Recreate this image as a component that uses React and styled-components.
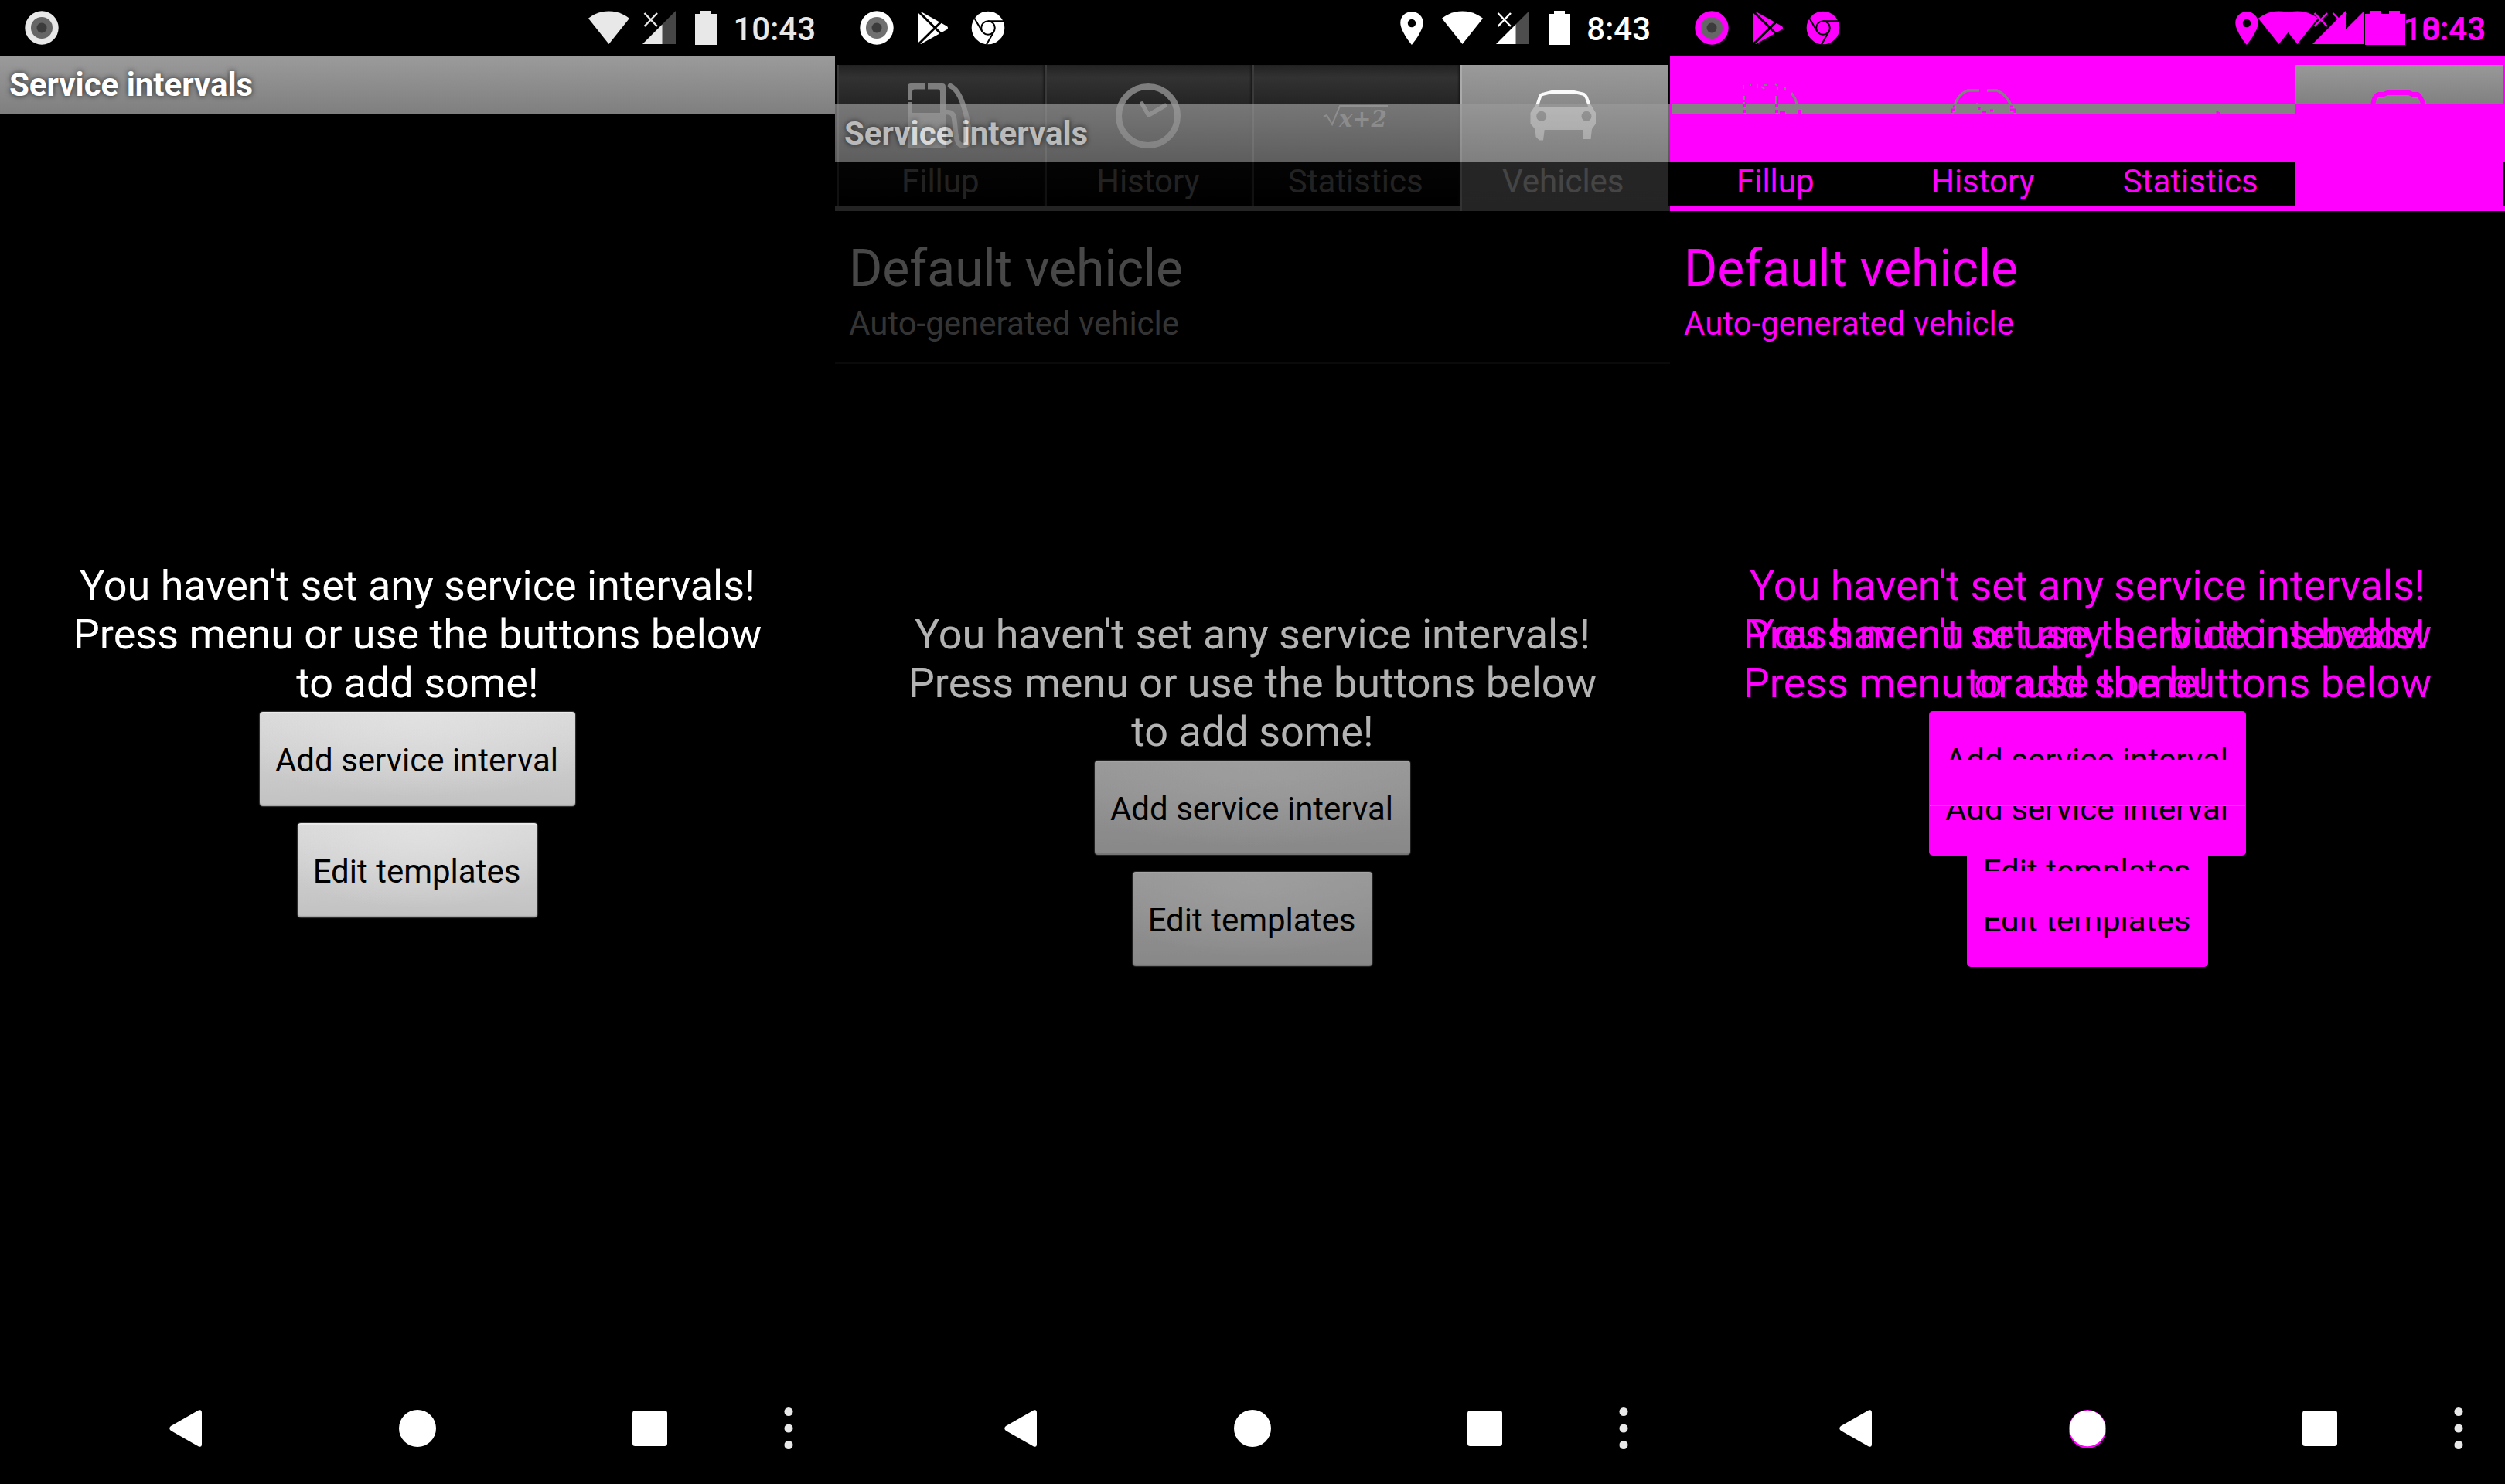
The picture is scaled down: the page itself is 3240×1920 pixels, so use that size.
import React from "react";
import styled, { createGlobalStyle, css } from "styled-components";

const MAGENTA = "#ff00ff";

const GlobalStyle = createGlobalStyle`
  *, *::before, *::after { box-sizing: border-box; }
  body {
    margin: 0;
    background: #000;
    font-family: Roboto, "Noto Sans", sans-serif;
  }
  h1, h2, p { margin: 0; font-weight: 400; }
  button {
    margin: 0;
    padding: 0;
    border: 0;
    background: none;
    font: inherit;
    color: inherit;
  }
  svg { display: block; flex: none; }
`;

const Board = styled.main`
  display: grid;
  grid-template-columns: repeat(3, minmax(0, 1fr));
  min-height: 100vh;
  background: #000;
`;

const Screen = styled.section`
  display: flex;
  flex-direction: column;
  min-width: 0;
  overflow: hidden;
  background: #000;
  color: #fff;
`;

/* ---------- status bar ---------- */

const StatusBar = styled.header`
  display: flex;
  justify-content: space-between;
  align-items: center;
  height: 72px;
  padding: 0 25px 0 30px;
  color: ${(p) => p.$color};
`;

const Notifications = styled.div`
  display: flex;
  gap: 24px;
`;

const IndicatorStack = styled.div`
  display: grid;
  justify-items: end;
`;

const Indicators = styled.div`
  grid-area: 1 / 1;
  display: flex;
  align-items: center;
  gap: 17px;
`;

const Clock = styled.time`
  font-size: 42px;
  line-height: 48px;
  font-weight: 500;
  padding-top: 3px;
`;

/* ---------- window layers ---------- */

const Body = styled.div`
  flex: 1;
  display: grid;
  grid-template-columns: minmax(0, 1fr);
  overflow: hidden;
`;

const Layer = styled.div`
  grid-area: 1 / 1;
  display: flex;
  flex-direction: column;
  background: ${(p) => p.$background || "transparent"};
  opacity: ${(p) => p.$opacity || 1};
  ${(p) => p.$entering && css`margin-block: 63px -63px;`}
`;

const TitleBar = styled.h1`
  height: 75px;
  padding: 13px 12px;
  background: linear-gradient(#9b9b9b, #7f7f7f);
  font-size: 42px;
  line-height: 49px;
  font-weight: 700;
  text-shadow: 0 0 7px rgba(0, 0, 0, 0.75);
`;

const TitleSpace = styled.div`
  height: 75px;
`;

const EmptyState = styled.div`
  flex: 1;
  display: flex;
  flex-direction: column;
  align-items: center;
  justify-content: center;
  padding: 0 72px 10px;
  color: ${(p) => p.$color || "#fff"};
`;

const Message = styled.p`
  font-size: 54px;
  line-height: 63px;
  text-align: center;
  margin-bottom: 6px;
`;

const Actions = styled.div`
  display: flex;
  flex-direction: column;
  align-items: center;
  gap: 22px;
`;

const ActionButton = styled.button`
  padding: 38px 22px 35px 20px;
  border-radius: 4px;
  background: radial-gradient(ellipse 70% 90% at 50% 0, #e1e1e1, rgba(225, 225, 225, 0)),
    linear-gradient(#d8d8d8, #c2c2c2);
  box-shadow: inset 0 2px 1px #ececec, inset 0 -2px 1px #a6a6a6, 0 0 1px 1px #333;
  color: #000;
  font-size: 42px;
  line-height: 49px;
`;

const DiffButton = styled(ActionButton)`
  position: relative;
  z-index: ${(p) => (p.$entering ? 2 : 1)};
  background: ${MAGENTA};
  box-shadow: 0 0 0 1px ${MAGENTA};
  ${(p) => p.$edge && css`border-top: 1px solid #a04fa0; padding-top: 37px;`}
  ${(p) =>
    p.$entering &&
    css`
      &::before {
        content: "";
        position: absolute;
        inset: 0 0 auto;
        height: 59px;
        background: ${MAGENTA};
        border-bottom: 1px solid #a86fa8;
      }
    `}
`;

/* ---------- tabs ---------- */

const TabRow = styled.nav`
  display: grid;
  grid-template-columns: repeat(4, minmax(0, 1fr));
  height: 189px;
  margin-top: 12px;
  padding: 0 3px;
  background: linear-gradient(${(p) => p.$rule}, ${(p) => p.$rule}) bottom / 100% 6px no-repeat;
`;

const Tab = styled.button`
  display: flex;
  flex-direction: column;
  align-items: center;
  gap: 18px;
  height: 183px;
  padding: 24px 4px 0 0;
  background: linear-gradient(#222, #323232 16px, #212121 60px, #0f0f0f 130px, #000);
  border-left: 2px solid #3a3a3a;
  box-shadow: inset -4px 0 3px -2px #111;
  color: #757575;
  font-size: 42px;
  line-height: 49px;
  ${(p) =>
    p.$selected &&
    css`
      height: 189px;
      background: linear-gradient(#9a9a9a, #878787 60px, #7a7a7a);
      border-left-color: #aaa;
      box-shadow: none;
      color: #eaeaea;
    `}
`;

const DiffTab = styled(Tab)`
  background: linear-gradient(transparent 51px, #838383 51px 63px, transparent 63px);
  border-left: 0;
  padding: 24px 2px 0 0;
  box-shadow: none;
  color: ${MAGENTA};
  ${(p) =>
    p.$selected &&
    css`
      background: linear-gradient(#999, #808080 51px, ${MAGENTA} 51px);
    `}
`;

const VehicleRow = styled.article`
  padding: 36px 18px 26px;
  border-bottom: 2px solid ${(p) => p.$rule};
`;

const VehicleName = styled.h2`
  color: ${(p) => p.$color};
  font-size: 66px;
  line-height: 77px;
`;

const VehicleNote = styled.p`
  margin-top: 8px;
  color: ${(p) => p.$color};
  font-size: 42px;
  line-height: 49px;
`;

/* ---------- navigation bar ---------- */

const NavBar = styled.footer`
  display: flex;
  height: 144px;
  padding: 0 30px 0 90px;
`;

const NavButton = styled.button`
  flex: ${(p) => (p.$narrow ? 2 : 10)} 1 0;
  min-width: 0;
  display: flex;
  align-items: center;
  justify-content: center;
`;

/* ---------- status icons ---------- */

const RecordIcon = ({ inner = "#707070" }) => (
  <svg width="48" height="48" viewBox="0 0 48 48">
    <circle cx="24" cy="24" r="21.7" fill="currentColor" />
    <circle cx="24" cy="24" r="14" fill={inner} />
    <circle cx="24" cy="24" r="6.5" fill="#3c3c3c" />
  </svg>
);

const PlayIcon = () => (
  <svg width="48" height="48" viewBox="0 0 48 48">
    <path d="M5 5L9 3L35 17.500L43 22Q45 24 43 26L35 30.500L9 45L5 43Z" fill="currentColor" />
    <path d="M5 2L36 32.500M5 46L36 15.500" stroke="#000" strokeWidth="3" />
  </svg>
);

const ChromeIcon = () => (
  <svg width="48" height="48" viewBox="0 0 48 48">
    <circle cx="24" cy="24" r="21.300" fill="currentColor" />
    <path d="M24 15.200H45M16.300 28.500L6.300 11.500M31.700 28.500L22 45.500" stroke="#000" strokeWidth="2" />
    <circle cx="24" cy="24" r="8.800" fill="currentColor" stroke="#000" strokeWidth="2" />
  </svg>
);

const PinIcon = () => (
  <svg width="37" height="44" viewBox="0 0 37 44">
    <path
      fillRule="evenodd"
      fill="currentColor"
      d="M15 1C6.800 1 .300 7.400 .300 15.500C.300 26.500 15 44 15 44S29.700 26.500 29.700 15.500C29.700 7.400 23.200 1 15 1ZM15 21.200A5.200 5.200 0 1 1 15 10.800A5.200 5.200 0 0 1 15 21.200Z"
    />
  </svg>
);

const WifiIcon = () => (
  <svg width="53" height="44" viewBox="0 0 53 44">
    <path fill="currentColor" d="M26.500 43L0 9.800C4 6.500 13 .500 26.500 .500S49 6.500 53 9.800Z" />
  </svg>
);

const SignalIcon = ({ dim = "#4d4d4d" }) => (
  <svg width="51" height="44" viewBox="0 0 51 44">
    <path fill={dim} d="M25 18L43 0V43H25Z" />
    <path fill="currentColor" d="M0 43L25.500 17.500V43Z" />
    <path d="M2.500 3L19 20M19 3L2.500 20" stroke="currentColor" strokeWidth="2.500" />
  </svg>
);

const BatteryIcon = () => (
  <svg width="32" height="44" viewBox="0 0 32 44">
    <path fill="currentColor" d="M7 0H21V4H28V44H0V4H7Z" />
  </svg>
);

/* ---------- tab icons ---------- */

const PumpIcon = () => (
  <svg width="84" height="84" viewBox="0 0 84 84">
    <path
      fillRule="evenodd"
      fill="#7d7d7d"
      d="M4 0H22V7.500H26V0H45Q49 0 49 4V84H0V24H6V21.500H0V4Q0 0 4 0ZM9 7.500Q6 7.500 6 11V38H42V11Q42 7.500 39 7.500Z"
    />
    <path
      d="M55 3C66 8 71 24 75 38C78 50 80 62 79 74C78 82 68 82 65 76C61 68 62 56 60 45C59 38 55 37 49 37"
      fill="none"
      stroke="#7d7d7d"
      strokeWidth="6.500"
      strokeLinecap="round"
    />
  </svg>
);

const HistoryIcon = () => (
  <svg width="84" height="84" viewBox="0 0 84 84">
    <circle cx="42" cy="42" r="38" fill="none" stroke="#7d7d7d" strokeWidth="8" />
    <path d="M34 26L42.500 41L64 28.500" fill="none" stroke="#7d7d7d" strokeWidth="5.500" strokeLinecap="round" strokeLinejoin="round" />
  </svg>
);

const RootIcon = () => (
  <svg width="84" height="84" viewBox="0 0 84 84">
    <path d="M1 43L5 41L12 53L22 29H84" fill="none" stroke="#7d7d7d" strokeWidth="2" />
    <text
      x="21"
      y="56"
      fill="#7d7d7d"
      fontFamily='"DejaVu Serif", serif'
      fontSize="29"
      fontWeight="700"
      fontStyle="italic"
    >
      x+2
    </text>
  </svg>
);

const CarIcon = () => (
  <svg width="86" height="84" viewBox="0 0 86 84">
    <path d="M9 29L13 17Q14 14 18 13.500L28 11H57L68 13.500Q71 14 73 18L77 29" fill="none" stroke="#fafafa" strokeWidth="4" />
    <path
      fillRule="evenodd"
      fill="#fafafa"
      d="M7 28L11 30H74L79 28L85 38V52L80 59L78.500 72H69V60H18.700L17 73.500H12L7.500 69L6.500 59L.500 52V38ZM14.700 35.800A6.500 6.500 0 1 0 14.700 48.800A6.500 6.500 0 1 0 14.700 35.800ZM73 35.800A6.500 6.500 0 1 0 73 48.800A6.500 6.500 0 1 0 73 35.800Z"
    />
  </svg>
);

const PumpDiffIcon = () => (
  <svg width="84" height="84" viewBox="0 0 84 84">
    <path
      d="M1 2V7M2 16V21M10 1V3M19 1V6M24 4L28 7M27 2H31M42 1L45 3M45 5V8M55 5V8"
      stroke="#828282"
      strokeWidth="2"
    />
    <path d="M1.500 24V27M43.500 16V27M63 12L68 20L71 29" fill="none" stroke="#828282" strokeWidth="3" />
    <path d="M0 29H4M0 36H4M42 29H46M42 36H46M48 37H55M73 34V39" stroke={MAGENTA} strokeWidth="4" />
  </svg>
);

const HistoryDiffIcon = () => (
  <svg width="84" height="84" viewBox="0 0 84 84">
    <path d="M5 28Q10 14 22 9H37M47 9H60Q72 14 78 28" fill="none" stroke="#828282" strokeWidth="3.500" />
    <path d="M34 25V28" stroke="#828282" strokeWidth="1.500" />
    <path d="M1 38V34H6M83 38V34H77M3 30H6M77 30H81M37 31V34M41 37H46M51 35H55" fill="none" stroke={MAGENTA} strokeWidth="3" />
  </svg>
);

const RootDiffIcon = () => (
  <svg width="84" height="84" viewBox="0 0 84 84">
    <path d="M77 35V39M79 37V39" stroke={MAGENTA} strokeWidth="3" />
  </svg>
);

const CarDiffIcon = () => (
  <svg width="86" height="84" viewBox="0 0 86 84">
    <path d="M10 30L11 23Q13 15 18 14H24L29 12H57L61 14H68Q73 17 76 30" fill="none" stroke={MAGENTA} strokeWidth="6" />
  </svg>
);

/* ---------- shared pieces ---------- */

const IndicatorSet = ({ time, location, dim }) => (
  <Indicators>
    {location && <PinIcon />}
    <WifiIcon />
    <SignalIcon dim={dim} />
    <BatteryIcon />
    <Clock>{time}</Clock>
  </Indicators>
);

const EmptyMessage = () => (
  <Message>
    You haven't set any service intervals!
    <br />
    Press menu or use the buttons below
    <br />
    to add some!
  </Message>
);

const ServiceIntervals = () => (
  <>
    <TitleBar>Service intervals</TitleBar>
    <EmptyState>
      <EmptyMessage />
      <Actions>
        <ActionButton type="button">Add service interval</ActionButton>
        <ActionButton type="button">Edit templates</ActionButton>
      </Actions>
    </EmptyState>
  </>
);

const DiffIntervals = ({ entering }) => (
  <Layer $entering={entering}>
    <TitleSpace />
    <EmptyState $color={MAGENTA}>
      <EmptyMessage />
      <Actions>
        <DiffButton type="button" $entering={entering}>Add service interval</DiffButton>
        <DiffButton type="button" $entering={entering} $edge={!entering}>Edit templates</DiffButton>
      </Actions>
    </EmptyState>
  </Layer>
);

const Navigation = ({ changed }) => (
  <NavBar>
    <NavButton type="button" aria-label="Back">
      <svg width="42" height="48" viewBox="0 0 42 48">
        <path fill="#fff" d="M38 .500Q42 -1 42 4V44Q42 49 38 47.500L2 27Q-1.500 24 2 21Z" />
      </svg>
    </NavButton>
    <NavButton type="button" aria-label="Home">
      <svg width="48" height="54" viewBox="0 -3 48 54">
        {changed && <ellipse cx="24" cy="25" rx="24.200" ry="25" fill={MAGENTA} />}
        <circle cx="24" cy="24" r={changed ? 23.2 : 24} fill="#fff" />
      </svg>
    </NavButton>
    <NavButton type="button" aria-label="Recent apps">
      <svg width="45" height="46" viewBox="0 0 45 46">
        <rect width="45" height="46" rx="3.500" fill="#fff" />
      </svg>
    </NavButton>
    <NavButton type="button" aria-label="Menu" $narrow>
      <svg width="12" height="56" viewBox="0 0 12 56">
        <g fill="#e8e8e8">
          <circle cx="6" cy="6.500" r="5.500" />
          <circle cx="6" cy="28" r="5.500" />
          <circle cx="6" cy="49.500" r="5.500" />
        </g>
      </svg>
    </NavButton>
  </NavBar>
);

export default function App() {
  return (
    <>
      <GlobalStyle />
      <Board>
        <Screen>
          <StatusBar $color="#e8e8e8">
            <Notifications>
              <RecordIcon inner="#666" />
            </Notifications>
            <IndicatorSet time="10:43" dim="#464646" />
          </StatusBar>
          <Body>
            <Layer>
              <ServiceIntervals />
            </Layer>
          </Body>
          <Navigation />
        </Screen>

        <Screen>
          <StatusBar $color="#fff">
            <Notifications>
              <RecordIcon />
              <PlayIcon />
              <ChromeIcon />
            </Notifications>
            <IndicatorSet time="8:43" location />
          </StatusBar>
          <Body>
            <Layer>
              <TabRow $rule="#7a7a7a">
                <Tab type="button"><PumpIcon />Fillup</Tab>
                <Tab type="button"><HistoryIcon />History</Tab>
                <Tab type="button"><RootIcon />Statistics</Tab>
                <Tab type="button" $selected><CarIcon />Vehicles</Tab>
              </TabRow>
              <VehicleRow $rule="#222">
                <VehicleName $color="#f0f0f0">Default vehicle</VehicleName>
                <VehicleNote $color="#b0b0b0">Auto-generated vehicle</VehicleNote>
              </VehicleRow>
            </Layer>
            <Layer $background="#000" $opacity={0.7} $entering>
              <ServiceIntervals />
            </Layer>
          </Body>
          <Navigation />
        </Screen>

        <Screen>
          <StatusBar $color={MAGENTA}>
            <Notifications>
              <RecordIcon inner="#666" />
              <PlayIcon />
              <ChromeIcon />
            </Notifications>
            <IndicatorStack>
              <IndicatorSet time="10:43" dim={MAGENTA} />
              <IndicatorSet time="8:43" dim={MAGENTA} location />
            </IndicatorStack>
          </StatusBar>
          <Body>
            <Layer $background={`linear-gradient(${MAGENTA} 138px, #000 138px)`}>
              <TabRow $rule={MAGENTA}>
                <DiffTab type="button"><PumpDiffIcon />Fillup</DiffTab>
                <DiffTab type="button"><HistoryDiffIcon />History</DiffTab>
                <DiffTab type="button"><RootDiffIcon />Statistics</DiffTab>
                <DiffTab type="button" aria-label="Vehicles" $selected><CarDiffIcon /></DiffTab>
              </TabRow>
              <VehicleRow $rule="transparent">
                <VehicleName $color={MAGENTA}>Default vehicle</VehicleName>
                <VehicleNote $color={MAGENTA}>Auto-generated vehicle</VehicleNote>
              </VehicleRow>
            </Layer>
            <DiffIntervals />
            <DiffIntervals entering />
          </Body>
          <Navigation changed />
        </Screen>
      </Board>
    </>
  );
}
